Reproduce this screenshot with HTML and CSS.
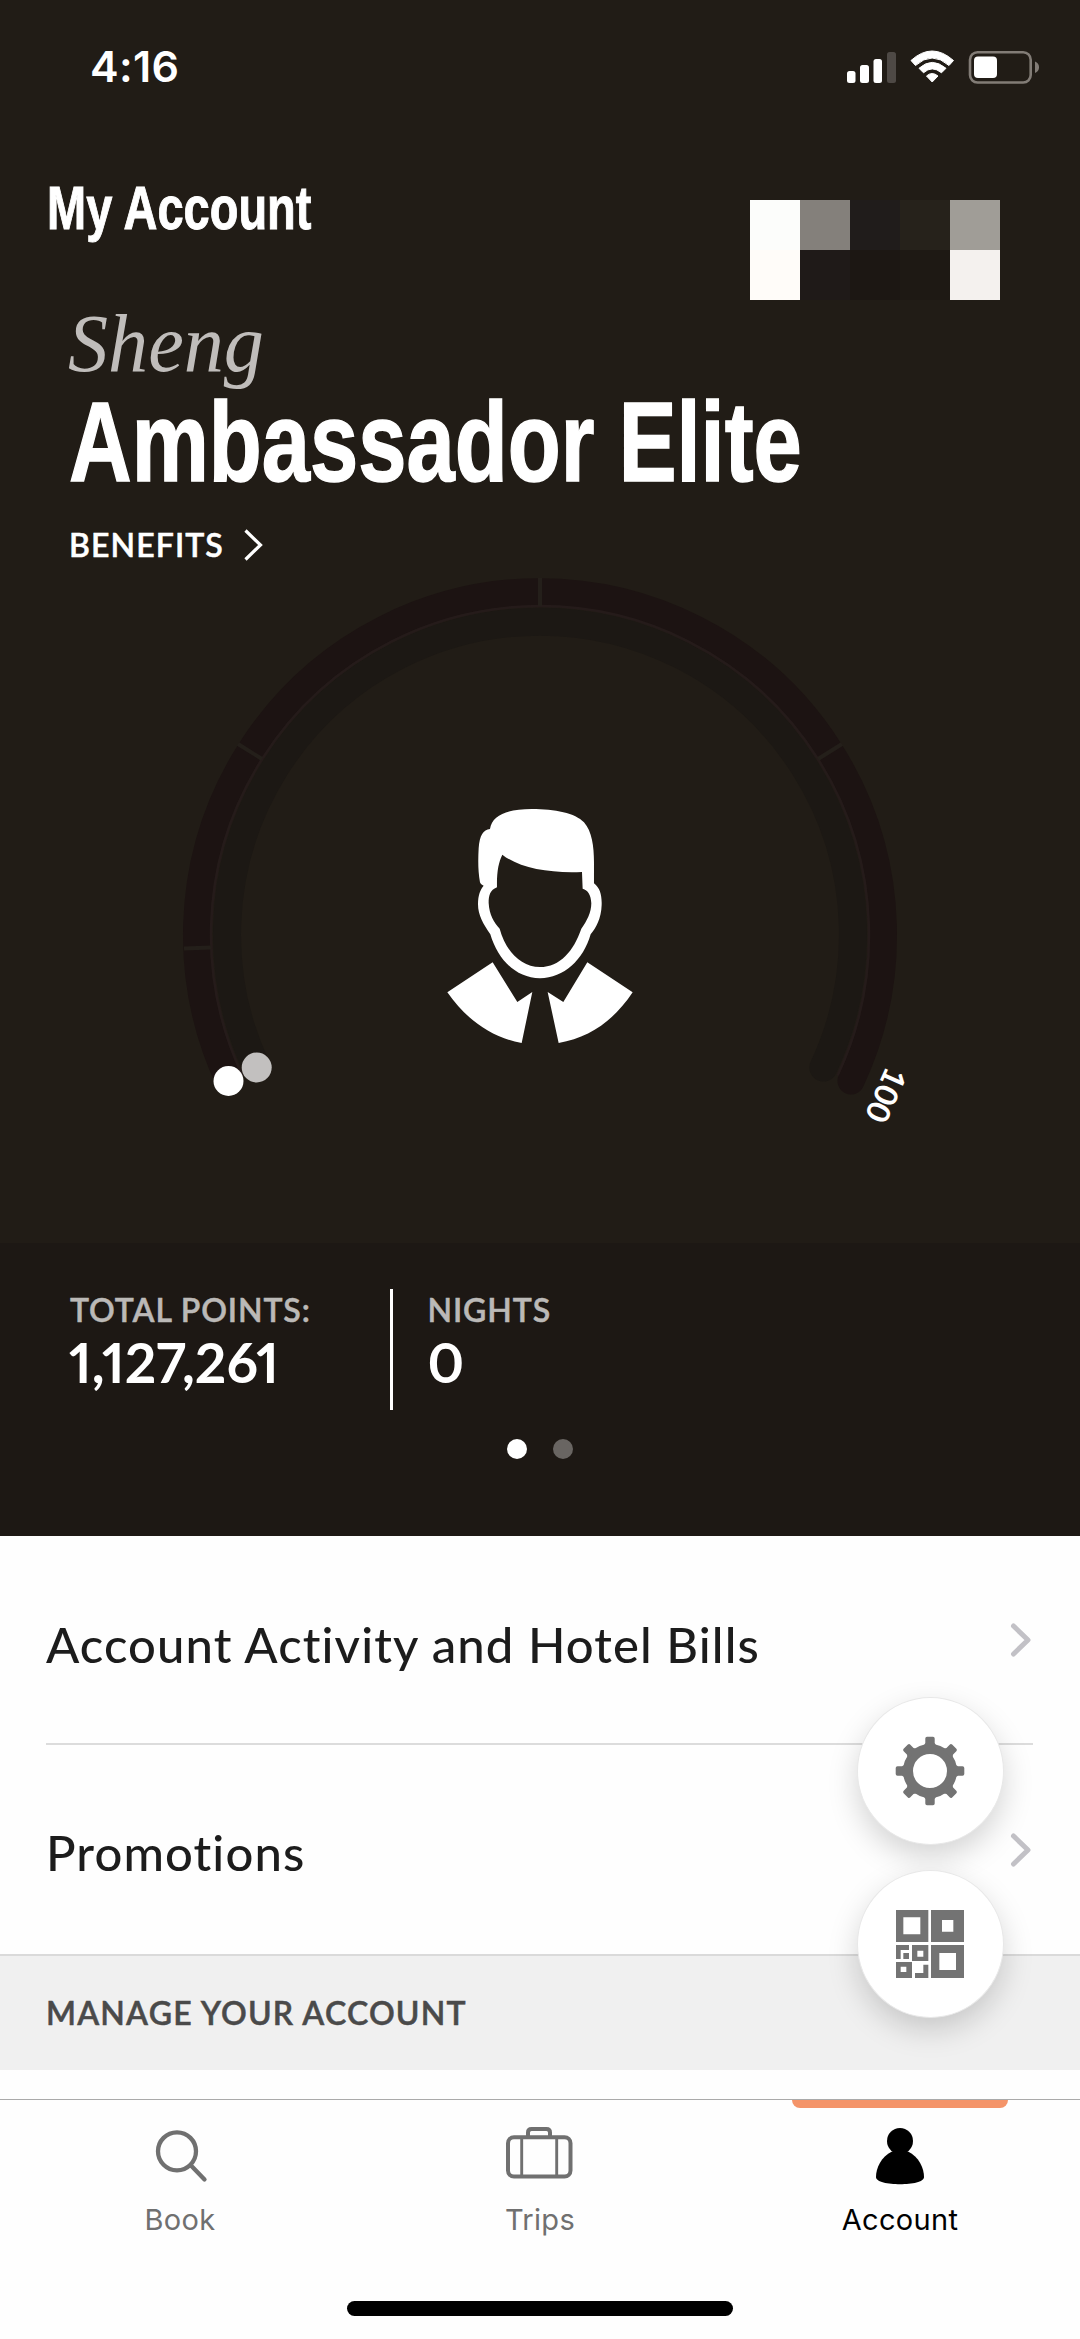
FILE: index.html
```html
<!DOCTYPE html>
<html lang="en">
<head>
<meta charset="utf-8">
<title>My Account</title>
<link rel="stylesheet" href="styles.css">
</head>
<body>
<div class="screen">
  <section class="hero">
    <div class="status">
      <span class="time">4:16</span>
      <svg class="status-icons" width="132" height="34" viewBox="846 49 132 34">
        <g fill="#fff">
          <rect x="847" y="70" width="8.500" height="12" rx="2.500"/>
          <rect x="860" y="64" width="9" height="18" rx="2.500"/>
          <rect x="873.500" y="58" width="8.500" height="24" rx="2.500"/>
          <rect x="887" y="51" width="9" height="31" rx="2.500" fill="#4e4945"/>
          <path d="M911 59.500Q932 40.500 953.500 59.500L949 64.500Q932 49.500 915.500 64.500Z" stroke="#fff" stroke-width="1" stroke-linejoin="round"/>
          <path d="M919 67.300Q932 55.500 946 67.300L941.500 71.800Q932 64 923.500 71.800Z" stroke="#fff" stroke-width="1" stroke-linejoin="round"/>
          <path d="M926.500 75Q932 70 938 75L932.200 81Z" stroke="#fff" stroke-width="1" stroke-linejoin="round"/>
        </g>
      </svg>
      <svg class="battery" width="72" height="34" viewBox="968 49 72 34">
        <rect x="970" y="51.200" width="60.700" height="30.300" rx="7.500" fill="none" stroke="#827c76" stroke-width="2.600"/>
        <rect x="974" y="55.500" width="23" height="21.500" rx="4" fill="#fff"/>
        <path d="M1035 60.500Q1039 62 1039 66.200T1035 72Z" fill="#827c76"/>
      </svg>
    </div>
    <header class="heading">
      <h1 class="title"><span class="fit">My Account</span></h1>
      <div class="mosaic">
        <i class="c1"></i><i class="c2"></i><i class="c3"></i><i class="c4"></i><i class="c5"></i>
        <i class="c6"></i><i class="c7"></i><i class="c8"></i><i class="c9"></i><i class="c10"></i>
      </div>
    </header>
    <div class="name"><span class="fit">Sheng</span></div>
    <div class="tier"><span class="fit">Ambassador Elite</span></div>
    <div class="benefits">
      <span>BENEFITS</span>
      <svg width="22" height="36" viewBox="0 0 22 36"><path d="M2.500 3.500 17.500 18 2.500 32.500" fill="none" stroke="#fff" stroke-width="3.200"/></svg>
    </div>
    <svg class="gauge" width="1080" height="667" viewBox="0 576 1080 667">
      <g fill="none" stroke-linecap="round">
        <path d="M256.600 1067.500A313 313 0 1 1 823.400 1067.500" stroke="#1c1814" stroke-width="28"/>
        <path d="M229 1081A343.500 343.500 0 1 1 851 1081" stroke="#1c1312" stroke-width="27"/>
        <path d="M242 1074.500A329 329 0 1 1 838 1074.500" stroke="#251b1a" stroke-width="2.500"/>
        <path d="M540 578V606M184 948.500 211 947.500M238 744 262 759M842 744 818 759" stroke="#241f1a" stroke-width="4" stroke-linecap="butt"/>
      </g>
      <circle cx="256.700" cy="1067.500" r="15" fill="#c2c0bf"/>
      <circle cx="228.500" cy="1081" r="15" fill="#fff"/>
      <g transform="translate(420 780) scale(.3333)" fill="#fff">
        <path fill-rule="evenodd" d="M210 147C216 105 265 87 335 87C405 87 466 99 492 127C516 154 522 200 522 246V310C540 324 546 345 545 375C544 415 528 444 512 463C490 540 432 594 360 595C288 594 234 540 211 463C190 432 174 406 174 372C174 346 181 328 191 317C186 316 181 311 180 307C174 275 174 240 176 205C179 165 190 150 210 147ZM247 224C236 246 230 275 231 322C210 330 206 347 206 369C208 405 222 428 239 446C258 515 303 561 360 561C420 561 461 513 484 446C501 423 514 397 514 370C513 345 504 330 488 326L486 276C390 280 300 266 247 224Z"/>
        <path d="M218 547 292 666 337 636 305 789C215 773 138 718 82 637ZM502 547 638 637C583 720 510 773 416 789L383 636 430 666Z"/>
      </g>
      <text class="goal" transform="translate(885.500 1095) rotate(114)" text-anchor="middle" y="11">100</text>
    </svg>
  </section>

  <section class="stats">
    <div class="stat-row">
      <div class="stat points"><span class="label">TOTAL POINTS:</span><strong>1,127,261</strong></div>
      <div class="stat nights"><span class="label">NIGHTS</span><strong>0</strong></div>
    </div>
    <div class="dots"><i class="on"></i><i></i></div>
  </section>

  <main class="list">
    <div class="row first">
      <span>Account Activity and Hotel Bills</span>
      <svg width="24" height="38" viewBox="0 0 24 38"><path d="M4.500 5 19 19 4.500 33" fill="none" stroke="#c2c1c6" stroke-width="5" stroke-linecap="round" stroke-linejoin="round"/></svg>
    </div>
    <div class="row">
      <span>Promotions</span>
      <svg width="24" height="38" viewBox="0 0 24 38"><path d="M4.500 5 19 19 4.500 33" fill="none" stroke="#c2c1c6" stroke-width="5" stroke-linecap="round" stroke-linejoin="round"/></svg>
    </div>
    <h2 class="section"><span>MANAGE YOUR ACCOUNT</span></h2>
  </main>

  <nav class="tabs">
    <div class="tab">
      <svg width="80" height="66" viewBox="-40 0 80 66" fill="none" stroke="#707070" stroke-width="4.300" stroke-linecap="round"><circle cx="-3" cy="31.300" r="19"/><path d="M11 45.500 24.500 59.500"/></svg>
      <span>Book</span>
    </div>
    <div class="tab">
      <svg width="80" height="66" viewBox="-40 0 80 66" fill="none" stroke="#707070" stroke-width="4"><rect x="-32" y="17.200" width="62.500" height="39.300" rx="6"/><path d="M-12 17V12.500Q-12 9 -8.500 9H6.500Q10 9 10 12.500V17"/><path d="M-18.300 17V57M16.700 17V57" stroke-width="2.900"/></svg>
      <span>Trips</span>
    </div>
    <div class="tab active">
      <svg width="80" height="66" viewBox="-40 0 80 66"><circle cx="0" cy="21" r="13"/><path d="M-8 31.500C-19 37-24 48-24 57C-24 62-12 64.200 0 64.200S24 62 24 57C24 48 19 37 8 31.500Z"/></svg>
      <span>Account</span>
    </div>
  </nav>
  <div class="home"></div>

  <button class="fab settings" aria-label="Settings">
    <svg width="70" height="70" viewBox="-35 -35 70 70" fill="#737373">
      <circle r="22" fill="none" stroke="#737373" stroke-width="10"/>
      <g id="teeth"><path id="t" d="M-7-24-4.700-28V-32.500Q-4.700-34.300-3-34.300H3Q4.700-34.300 4.700-32.500V-28L7-24Z"/>
      <use href="#t" transform="rotate(45)"/><use href="#t" transform="rotate(90)"/><use href="#t" transform="rotate(135)"/></g>
      <use href="#teeth" transform="rotate(180)"/>
    </svg>
  </button>
  <button class="fab code" aria-label="Member code">
    <svg width="68" height="68" viewBox="0 0 204 204" fill="#737373" fill-rule="evenodd">
      <path d="M0 0H97V96H0ZM22 22V73H73V22ZM105 0H204V96H105ZM138 30V65H172V30ZM105 105H204V204H105ZM130 129V180H180V129ZM48 105H97V153H48ZM64 122V140H82V122ZM0 156H48V204H0ZM14 170V186H31V170ZM0 105H39V120H14V147H0ZM22 129H39V147H22ZM82 164H97V204H57V189H82Z"/>
    </svg>
  </button>
</div>
</body>
</html>
```
FILE: styles.css
```css
* { box-sizing: border-box; }
body { margin: 0; background: #fefefe; }
.screen {
  position: relative;
  display: flex;
  flex-direction: column;
  width: 1080px;
  height: 2339px;
  overflow: hidden;
  font-family: Lato, "Liberation Sans", sans-serif;
  font-variant-ligatures: none;
}
svg { display: block; flex: none; }
.fit { display: inline-block; transform-origin: 0 50%; white-space: nowrap; }

.hero { height: 1243px; background: #211c16; color: #fff; flex: none; }
.status { display: flex; align-items: center; height: 133px; padding: 0 40px 0 90px; }
.time { font: 600 43px/50px Inter, sans-serif; margin: 0 auto 2px 0; letter-spacing: .3px; }
.status-icons { margin-right: -10px; }
.heading { display: flex; justify-content: space-between; height: 167px; padding: 45px 80px 0 47px; }
.title { margin: 0; font: 700 61px/60px "Liberation Sans", sans-serif; -webkit-text-stroke: 1px #fff; }
.title .fit { transform: scaleX(.77); }
.mosaic { display: grid; grid-template: repeat(2, 50px) / repeat(5, 50px); margin-top: 22px; }
.c1 { background: #fcfdfb; }
.c2 { background: #84807b; }
.c3 { background: #201c1b; }
.c4 { background: #26221b; }
.c5 { background: #a09d97; }
.c6 { background: #fffcf9; }
.c7 { background: #1f1a18; }
.c8 { background: #1c1713; }
.c9 { background: #1e1914; }
.c10 { background: #f4f1ee; }
.name { height: 86px; padding: 1px 0 0 68px; color: #c0bdbb; font: italic 400 83px/85px "Liberation Serif", serif; }
.name .fit { transform: scaleX(.966); }
.tier { height: 110px; padding: 1px 0 0 69px; font: 700 114px/110px "Liberation Sans", sans-serif; -webkit-text-stroke: 1.500px #fff; }
.tier .fit { transform: scaleX(.761); }
.benefits { display: flex; align-items: center; gap: 19px; height: 80px; padding: 18px 0 0 69px; font: 600 32px/40px Lato, sans-serif; letter-spacing: 1.1px; -webkit-text-stroke: .500px #fff; }
.goal { font: 700 32px Lato, sans-serif; fill: #fff; }

.stats { height: 293px; flex: none; padding: 46px 0 0 70px; background: #1d1814; color: #fff; }
.stat-row { display: flex; height: 121px; }
.stat { padding-top: 4px; }
.points { width: 322.500px; border-right: 3px solid #fff; }
.nights { padding-left: 35px; }
.label { display: block; color: #bbb9b7; font: 600 32px/34px Lato, sans-serif; letter-spacing: .9px; -webkit-text-stroke: .500px #bbb9b7; }
.stat strong { display: block; font: 700 55px/70px Lato, sans-serif; font-variant-numeric: proportional-nums; }
.points strong { letter-spacing: 0; margin-left: -1px; }
.dots { display: flex; gap: 26px; margin: 29px 0 0 437px; }
.dots i { width: 20px; height: 20px; border-radius: 50%; background: #696562; }
.dots .on { background: #fff; }

.list { color: #1c1c1c; flex: none; }
.row { display: flex; align-items: center; justify-content: space-between; height: 209px; margin: 0 47px 0 46px; font: 500 49px/60px Lato, sans-serif; letter-spacing: 1.100px; }
.row span { padding-top: 4px; }
.first { border-bottom: 2px solid #dcdcdc; }
.first span { padding-top: 9px; }
.section { display: flex; align-items: center; height: 116px; margin: 0; padding: 0 46px; background: #f0f0f0; border-top: 2px solid #dadada; color: #4a4a4a; font: 600 32px/40px Lato, sans-serif; letter-spacing: 1.200px; -webkit-text-stroke: .500px #4a4a4a; }

.tabs { display: grid; grid-template-columns: repeat(3, 1fr); margin-top: 29px; height: 190px; border-top: 1px solid #aaa; font: 400 29px/36px Inter, sans-serif; letter-spacing: .3px; color: #707070; }
.tab { position: relative; display: flex; flex-direction: column; align-items: center; gap: 16px; padding-top: 20px; }
.active { color: #000; }
.active::before { content: ""; position: absolute; top: 0; left: 72px; width: 216px; height: 8px; background: #f49469; border-radius: 0 0 8px 8px; }
.home { width: 386px; height: 15px; margin: 12px 0 0 347px; border-radius: 8px; background: #000; flex: none; }

.fab { position: absolute; left: 857px; width: 147px; height: 148px; display: flex; align-items: center; justify-content: center; padding: 0 2px 0 0; border: 1px solid #e8e8e8; border-radius: 50%; background: #fff; box-shadow: 0 12px 30px rgba(0, 0, 0, .17); }
.settings { top: 1697px; }
.code { top: 1870px; }
```
